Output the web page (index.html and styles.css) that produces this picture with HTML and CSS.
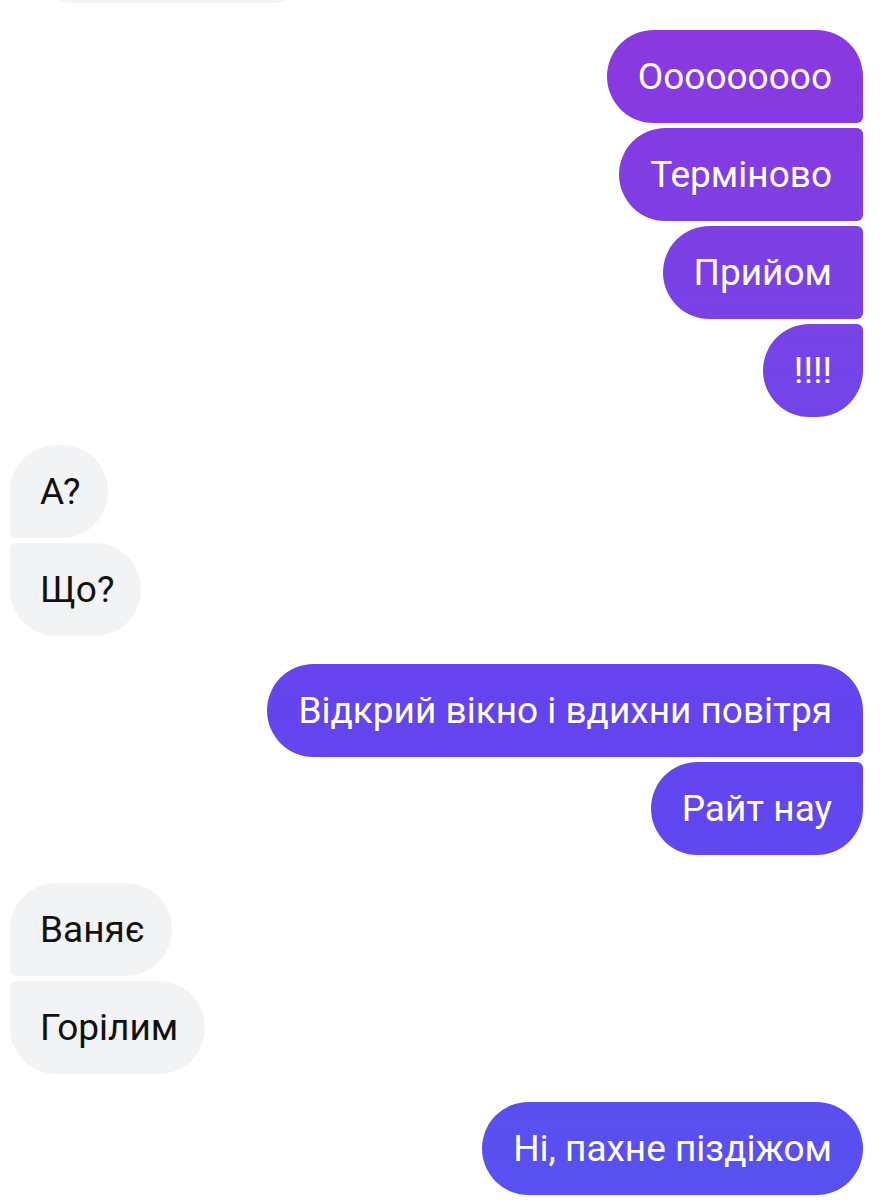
FILE: index.html
```html
<!DOCTYPE html>
<html lang="uk">
<head>
    <meta charset="UTF-8"/>
    <meta name="viewport" content="width=device-width, initial-scale=1.0"/>
    <link rel="stylesheet" href="styles.css">
</head>
<body>
<main class="chat">
    <div class="chat__group chat__group--cut">
        <div class="bubble bubble--in bubble--cut"></div>
    </div>
    <div class="chat__group chat__group--out">
        <div class="bubble bubble--out">Ооооооооо</div>
        <div class="bubble bubble--out">Терміново</div>
        <div class="bubble bubble--out">Прийом</div>
        <div class="bubble bubble--out">!!!!</div>
    </div>
    <div class="chat__group chat__group--in">
        <div class="bubble bubble--in">А?</div>
        <div class="bubble bubble--in">Що?</div>
    </div>
    <div class="chat__group chat__group--out">
        <div class="bubble bubble--out">Відкрий вікно і вдихни повітря</div>
        <div class="bubble bubble--out">Райт нау</div>
    </div>
    <div class="chat__group chat__group--in">
        <div class="bubble bubble--in">Ваняє</div>
        <div class="bubble bubble--in">Горілим</div>
    </div>
    <div class="chat__group chat__group--out">
        <div class="bubble bubble--out">Ні, пахне піздіжом</div>
    </div>
</main>
</body>
</html>
```

FILE: styles.css
```css
:root {
    --radius: 46.5px;
    --corner: 6px;
    --incoming: #f2f3f5;
    --text-dark: #111111;
}

html,
body {
    margin: 0;
    background: #ffffff;
}

body {
    font-family: Roboto, "Liberation Sans", sans-serif;
}

.chat {
    display: flex;
    flex-direction: column;
    gap: 28px;
    padding: 0 19px 0 10px;
}

.chat__group {
    display: flex;
    flex-direction: column;
    gap: 5px;
}

.chat__group--out {
    align-items: flex-end;
}

.chat__group--in {
    align-items: flex-start;
}

.chat__group--cut {
    margin-top: -63px;
    margin-bottom: -1px;
    padding-left: 30px;
}

.bubble {
    box-sizing: border-box;
    height: 93px;
    padding: 0 31px;
    font-size: 37px;
    line-height: 93px;
    white-space: nowrap;
    border-radius: var(--radius);
}

.bubble--out {
    color: #ffffff;
    background: linear-gradient(to bottom, #8d37de 0, #7444e8 380px, #6444ef 720px, #5851f0 1200px);
    background-attachment: fixed;
    border-top-right-radius: var(--corner);
    border-bottom-right-radius: var(--corner);
}

.bubble--out:first-child {
    border-top-right-radius: var(--radius);
}

.bubble--out:last-child {
    border-bottom-right-radius: var(--radius);
}

.bubble--in {
    padding: 0 27px 0 30px;
    color: var(--text-dark);
    background: var(--incoming);
    border-top-left-radius: var(--corner);
    border-bottom-left-radius: var(--corner);
}

.bubble--in:first-child {
    border-top-left-radius: var(--radius);
}

.bubble--in:last-child {
    border-bottom-left-radius: var(--radius);
}

.bubble--cut {
    width: 263px;
    height: 66px;
    background: #f1f4f6;
    border-radius: 40px;
}
```
